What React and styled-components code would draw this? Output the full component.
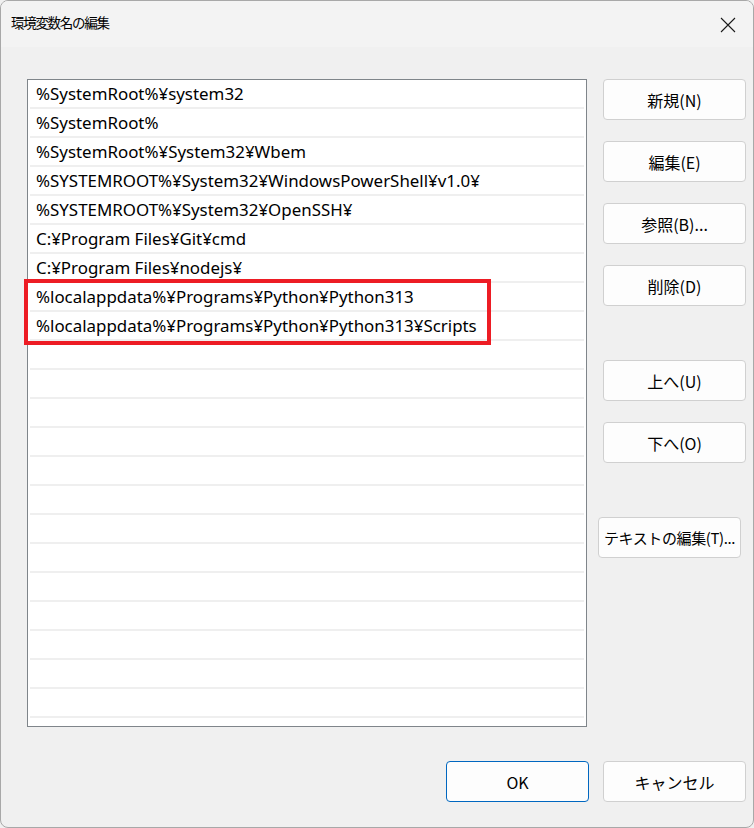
import styled, { createGlobalStyle } from "styled-components";

const GlobalStyle = createGlobalStyle`
  html, body {
    margin: 0;
    padding: 0;
    background: #f0f0f0;
  }
  * { box-sizing: border-box; }
`;

const paths = [
    "%SystemRoot%¥system32",
    "%SystemRoot%",
    "%SystemRoot%¥System32¥Wbem",
    "%SYSTEMROOT%¥System32¥WindowsPowerShell¥v1.0¥",
    "%SYSTEMROOT%¥System32¥OpenSSH¥",
    "C:¥Program Files¥Git¥cmd",
    "C:¥Program Files¥nodejs¥",
    "%localappdata%¥Programs¥Python¥Python313",
    "%localappdata%¥Programs¥Python¥Python313¥Scripts",
];

const TOTAL_ROWS = 23;

const Window = styled.div`
  position: relative;
  width: 754px;
  height: 828px;
  background: #f0f0f0;
  border: 1px solid #a8a8a8;
  border-radius: 8px;
  overflow: hidden;
  font-family: "Noto Sans CJK JP", "Noto Sans", sans-serif;
  color: #000;
`;

const TitleBar = styled.div`
  height: 46px;
  display: flex;
  align-items: center;
  justify-content: space-between;
  padding: 0 15px 0 10px;
  background: #f3f3f3;
`;

const Title = styled.div`
  font-size: 13.5px;
  letter-spacing: -1.3px;
  line-height: 1;
  margin-top: -2px;
`;

const CloseButton = styled.div`
  width: 20px;
  height: 20px;
  display: flex;
  align-items: center;
  justify-content: center;
  margin-top: 2px;
`;

const Body = styled.div`
  display: flex;
  gap: 16px;
  padding: 32px 0 0 26px;
`;

const ListWrap = styled.div`
  position: relative;
`;

const List = styled.div`
  width: 560px;
  height: 648px;
  background: #fff;
  border: 1px solid #7f858a;
  overflow: hidden;
`;

const Row = styled.div`
  height: 29px;
  display: flex;
  align-items: center;
  padding: 0 0 0 6px;
  margin: 0 2px;
  border-bottom: 2px solid #efefef;
  font-family: "Noto Sans", "Noto Sans CJK JP", sans-serif;
  font-size: 16.9px;
  white-space: nowrap;
`;

const Highlight = styled.div`
  position: absolute;
  left: -3px;
  top: 200px;
  width: 467px;
  height: 66px;
  border: 4px solid #ed1c24;
  pointer-events: none;
`;

const ButtonColumn = styled.div`
  display: flex;
  flex-direction: column;
  gap: 21px;
`;

const Spacer = styled.div`
  height: ${(p) => p.$h}px;
`;

const Button = styled.div`
  width: 143px;
  height: 41px;
  display: flex;
  align-items: center;
  justify-content: center;
  background: #fdfdfd;
  border: 1px solid ${(p) => (p.$primary ? "#0067c0" : "#d0d0d0")};
  border-radius: 4px;
  font-size: ${(p) => p.$size || 16}px;
  margin-left: ${(p) => p.$shift || 0}px;
  white-space: nowrap;
  letter-spacing: ${(p) => p.$spacing || 0}px;
`;

const Footer = styled.div`
  display: flex;
  justify-content: flex-end;
  gap: 14px;
  padding: 34px 7px 0 0;
`;

const Grip = styled.div`
  position: absolute;
  right: 1px;
  bottom: 1px;
  width: 10px;
  height: 10px;
`;

const CloseIcon = () => (
    <svg width="16" height="16" viewBox="0 0 16 16">
        <path d="M1 1 L15 15 M15 1 L1 15" stroke="#1a1a1a" strokeWidth="1.1" fill="none" />
    </svg>
);

const GripIcon = () => (
    <svg width="10" height="10" viewBox="0 0 10 10" fill="#a0a0a0">
        <rect x="7" y="1" width="2" height="2" />
        <rect x="4" y="4" width="2" height="2" />
        <rect x="7" y="4" width="2" height="2" />
        <rect x="1" y="7" width="2" height="2" />
        <rect x="4" y="7" width="2" height="2" />
        <rect x="7" y="7" width="2" height="2" />
    </svg>
);

const App = () => {
    const rows = Array.from({ length: TOTAL_ROWS }, (_, i) => paths[i] || "");

    return (
        <>
            <GlobalStyle />
            <Window>
                <TitleBar>
                    <Title>環境変数名の編集</Title>
                    <CloseButton>
                        <CloseIcon />
                    </CloseButton>
                </TitleBar>
                <Body>
                    <ListWrap>
                        <List>
                            {rows.map((text, i) => (
                                <Row key={i}>{text}</Row>
                            ))}
                        </List>
                        <Highlight />
                    </ListWrap>
                    <ButtonColumn>
                        <Button>新規(N)</Button>
                        <Button>編集(E)</Button>
                        <Button>参照(B)...</Button>
                        <Button>削除(D)</Button>
                        <Spacer $h={12} />
                        <Button>上へ(U)</Button>
                        <Button>下へ(O)</Button>
                        <Spacer $h={12} />
                        <Button $shift={-5} $size={15} $spacing={-0.4}>テキストの編集(T)...</Button>
                    </ButtonColumn>
                </Body>
                <Footer>
                    <Button $primary>OK</Button>
                    <Button>キャンセル</Button>
                </Footer>
                <Grip>
                    <GripIcon />
                </Grip>
            </Window>
        </>
    );
};

export default App;
